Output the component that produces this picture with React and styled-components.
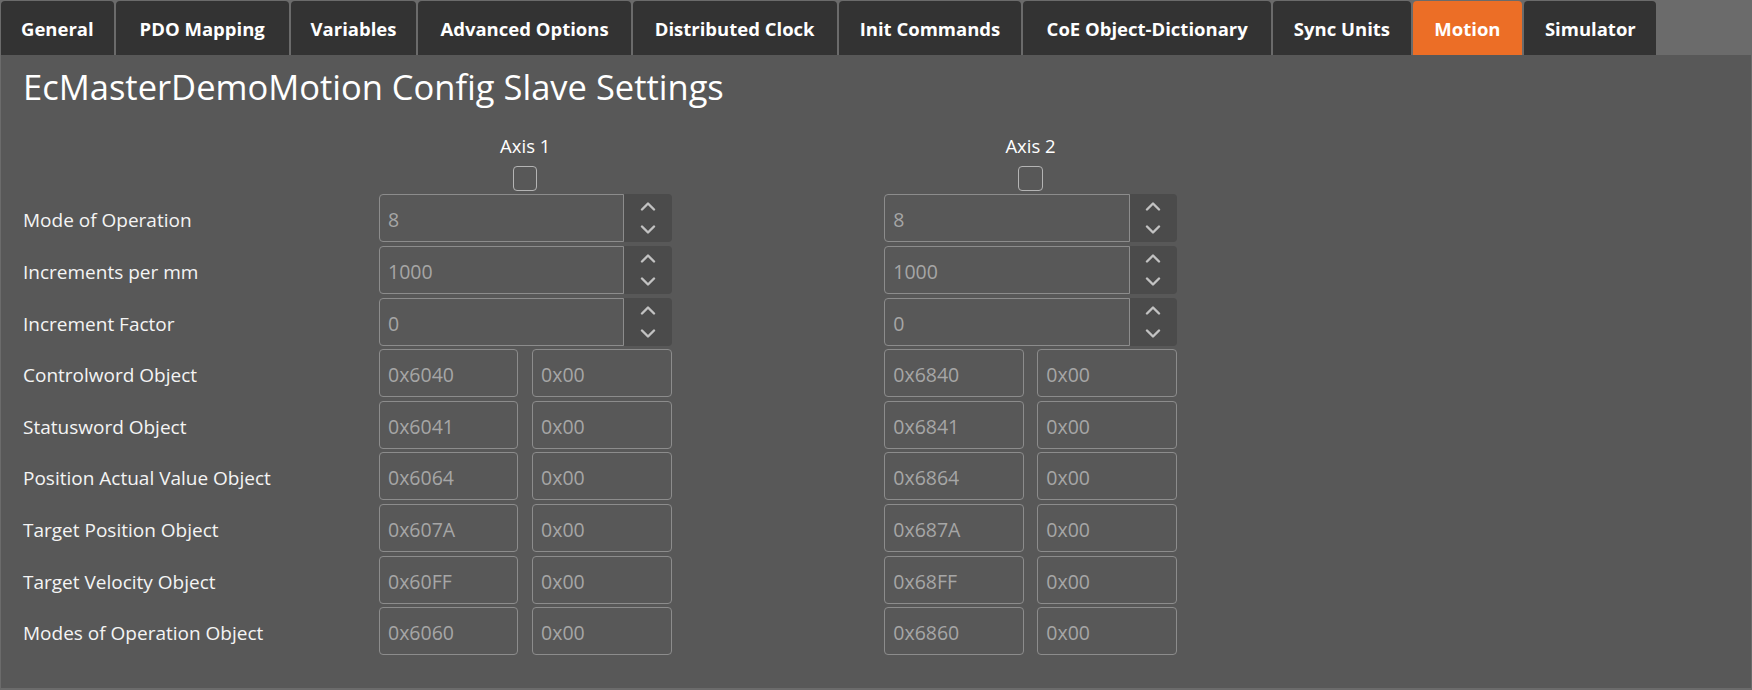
import React from 'react';
import styled, { createGlobalStyle } from 'styled-components';

const Global = createGlobalStyle`
  html, body { margin: 0; padding: 0; background: #6b6b6b; }
  body { font-family: "Open Sans", "Noto Sans", sans-serif; overflow: hidden; }
  * { box-sizing: border-box; }
`;

const Page = styled.div`
  height: 690px;
  display: flex;
  flex-direction: column;
  background: #6b6b6b;
`;

const TabBar = styled.nav`
  display: flex;
  gap: 2px;
  padding: 1px 0 0 1px;
  height: 55px;
  flex-shrink: 0;
`;

const Tab = styled.div`
  width: ${(p) => p.$w}px;
  height: 54px;
  display: flex;
  align-items: center;
  justify-content: center;
  background: ${(p) => (p.$active ? '#ec6e26' : '#333333')};
  color: #ffffff;
  font-weight: 700;
  font-size: 18.5px;
  border-radius: 4px 4px 0 0;
  white-space: nowrap;
`;

const Panel = styled.main`
  flex: 1;
  margin: 0 1px 2px 1px;
  background: #585858;
  padding: 9.3px 0 0 22px;
`;

const Title = styled.h1`
  margin: 0 0 23.3px 0;
  font-size: 34.5px;
  font-weight: 400;
  line-height: 45px;
  color: #ffffff;
`;

const Form = styled.div`
  display: grid;
  grid-template-columns: 356px 292.5px 212.8px 292.5px;
  row-gap: 3.625px;
`;

const AxisHeader = styled.div`
  grid-column: ${(p) => p.$col};
  display: flex;
  flex-direction: column;
  align-items: center;
  gap: 8.7px;
`;

const AxisName = styled.div`
  font-size: 18.5px;
  line-height: 25px;
  color: #ffffff;
`;

const CheckBox = styled.div`
  width: 24.4px;
  height: 24.4px;
  border: 1px solid #b4b4b4;
  border-radius: 4px;
`;

const Label = styled.div`
  grid-column: 1;
  height: 48px;
  padding-top: 4px;
  display: flex;
  align-items: center;
  font-size: 19px;
  color: #f4f4f4;
  white-space: nowrap;
`;

const Cell = styled.div`
  grid-column: ${(p) => p.$col};
  height: 48px;
`;

const Spinner = styled.div`
  display: flex;
  height: 100%;
`;

const Field = styled.input`
  height: 48px;
  min-width: 0;
  flex: 1;
  width: 100%;
  margin: 0;
  padding: 3px 8px 0 8px;
  background: #585858;
  border: 1px solid #8c8c8c;
  border-radius: ${(p) => (p.$joined ? '4px 0 0 4px' : '4px')};
  color: #a6a6a6;
  font-family: "Open Sans", "Noto Sans", sans-serif;
  font-size: 19.5px;
  outline: none;
`;

const SpinButtons = styled.div`
  width: 47.3px;
  flex-shrink: 0;
  display: flex;
  flex-direction: column;
  background: #4b4b4b;
  border-radius: 0 4px 4px 0;
`;

const SpinButton = styled.div`
  flex: 1;
  display: flex;
  align-items: center;
  justify-content: center;
`;

const HexPair = styled.div`
  display: grid;
  grid-template-columns: 1fr 1fr;
  column-gap: 13.6px;
  height: 100%;
`;

const Chevron = ({ up }) => (
  <svg width="16" height="10" viewBox="0 0 16 10">
    <polyline
      points={up ? '2,8.5 8,2.5 14,8.5' : '2,1.5 8,7.5 14,1.5'}
      fill="none"
      stroke="#c2c2c2"
      strokeWidth="2.4"
      strokeLinecap="round"
      strokeLinejoin="round"
    />
  </svg>
);

const tabs = [
  ['General', 112.7],
  ['PDO Mapping', 173],
  ['Variables', 125.7],
  ['Advanced Options', 212.3],
  ['Distributed Clock', 204],
  ['Init Commands', 182.5],
  ['CoE Object-Dictionary', 248],
  ['Sync Units', 137.5],
  ['Motion', 109.5],
  ['Simulator', 132.3],
];

const spinRows = [
  ['Mode of Operation', '8', '8'],
  ['Increments per mm', '1000', '1000'],
  ['Increment Factor', '0', '0'],
];

const hexRows = [
  ['Controlword Object', '0x6040', '0x6840'],
  ['Statusword Object', '0x6041', '0x6841'],
  ['Position Actual Value Object', '0x6064', '0x6864'],
  ['Target Position Object', '0x607A', '0x687A'],
  ['Target Velocity Object', '0x60FF', '0x68FF'],
  ['Modes of Operation Object', '0x6060', '0x6860'],
];

const SpinField = ({ value }) => (
  <Spinner>
    <Field $joined readOnly value={value} />
    <SpinButtons>
      <SpinButton><Chevron up /></SpinButton>
      <SpinButton><Chevron /></SpinButton>
    </SpinButtons>
  </Spinner>
);

const HexField = ({ index, sub }) => (
  <HexPair>
    <Field readOnly value={index} />
    <Field readOnly value={sub} />
  </HexPair>
);

export default function App() {
  return (
    <Page>
      <Global />
      <TabBar>
        {tabs.map(([name, w]) => (
          <Tab key={name} $w={w} $active={name === 'Motion'}>
            {name}
          </Tab>
        ))}
      </TabBar>
      <Panel>
        <Title>EcMasterDemoMotion Config Slave Settings</Title>
        <Form>
          <AxisHeader $col={2}>
            <AxisName>Axis 1</AxisName>
            <CheckBox />
          </AxisHeader>
          <AxisHeader $col={4}>
            <AxisName>Axis 2</AxisName>
            <CheckBox />
          </AxisHeader>
          {spinRows.map(([label, a, b]) => (
            <React.Fragment key={label}>
              <Label>{label}</Label>
              <Cell $col={2}><SpinField value={a} /></Cell>
              <Cell $col={4}><SpinField value={b} /></Cell>
            </React.Fragment>
          ))}
          {hexRows.map(([label, a, b]) => (
            <React.Fragment key={label}>
              <Label>{label}</Label>
              <Cell $col={2}><HexField index={a} sub="0x00" /></Cell>
              <Cell $col={4}><HexField index={b} sub="0x00" /></Cell>
            </React.Fragment>
          ))}
        </Form>
      </Panel>
    </Page>
  );
}
